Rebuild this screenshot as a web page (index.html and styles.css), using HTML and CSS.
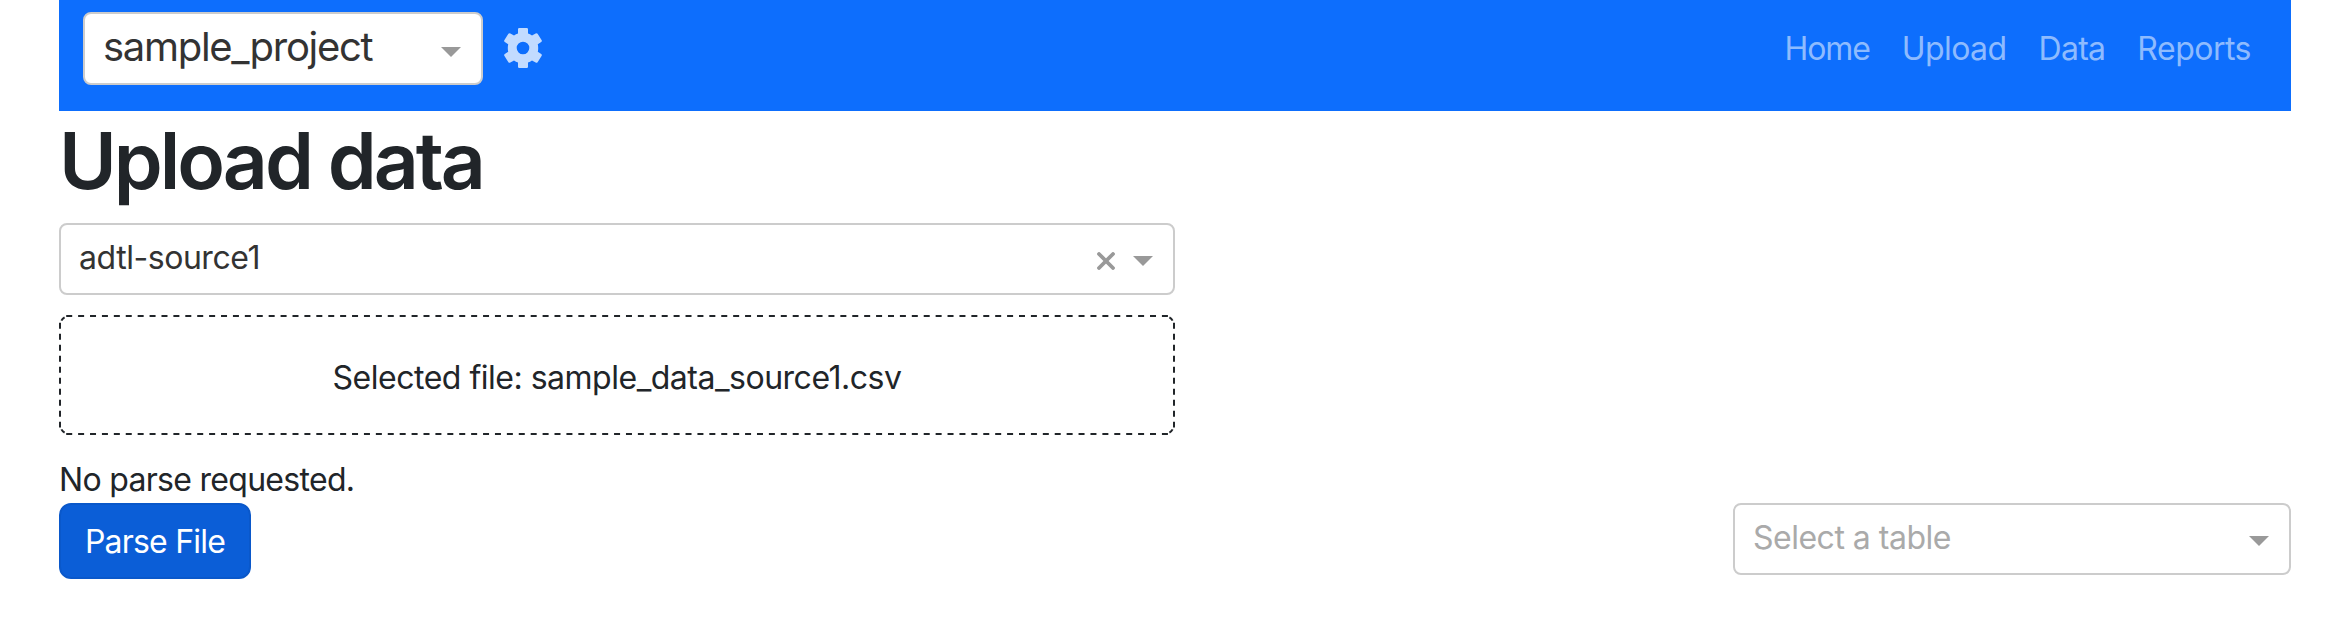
FILE: index.html
```
<!DOCTYPE html>
<html lang="en">
<head>
<meta charset="utf-8">
<title>Upload data</title>
<link rel="stylesheet" href="styles.css">
</head>
<body>
<div class="container">
  <nav class="navbar">
    <div class="select select-project"><span class="value">sample_project</span><span class="arrow"></span></div>
    <svg class="gear" viewBox="0 0 40 40"><path fill-rule="evenodd" d="M15 1.2Q15 0 16.2 0H23.8Q25 0 25 1.2V5.4Q27 6 29 7.4L32.6 5.4Q33.800 4.700 34.600 5.800L38.700 12.200Q39.200 13.300 38.200 14L34.800 16.200Q35.600 20 34.800 23.800L38.200 26Q39.200 26.700 38.700 27.800L34.600 34.200Q33.800 35.300 32.600 34.600L29 32.600Q27 34 25 34.600V38.800Q25 40 23.800 40H16.200Q15 40 15 38.800V34.600Q13 34 11 32.600L7.400 34.600Q6.200 35.300 5.400 34.200L1.300 27.800Q.8 26.700 1.800 26L5.200 23.800Q4.400 20 5.200 16.200L1.800 14Q.8 13.300 1.300 12.200L5.400 5.800Q6.200 4.700 7.400 5.400L11 7.400Q13 6 15 5.400ZM20 13.700A6.300 6.300 0 1 0 20 26.300A6.300 6.300 0 1 0 20 13.700Z"/></svg>
    <div class="links"><a class="home">Home</a><a class="upload">Upload</a><a class="data">Data</a><a class="reports">Reports</a></div>
  </nav>
  <h1>Upload data</h1>
  <div class="select select-source"><span class="value">adtl-source1</span><svg class="clear" viewBox="0 0 18 18"><path d="M2 2L16 16M16 2L2 16"/></svg><span class="arrow"></span></div>
  <div class="dropzone">
    <svg class="outline" viewBox="0 0 1116 120"><path class="horizontal" d="M7.200 1H1109M7.200 119H1109"/><path class="vertical" d="M1 7.700V112.500M1115 7.700V112.500"/><path d="M2.400 5.600Q3.500 3.500 5.600 2.400M1110.400 2.400Q1112.500 3.500 1113.600 5.600M2.400 114.400Q3.500 116.500 5.600 117.600M1110.400 117.600Q1112.500 116.500 1113.600 114.400"/></svg>
    <span class="file">Selected file: sample_data_source1.csv</span>
  </div>
  <div class="status">No parse requested.</div>
  <div class="actions">
    <button class="parse">Parse File</button>
    <div class="select select-table"><span class="value">Select a table</span><span class="arrow"></span></div>
  </div>
</div>
</body>
</html>
```

FILE: styles.css
```
* { box-sizing: border-box; }
body { margin: 0; background: #fff; color: #212529; font: 430 32px/48px Inter, sans-serif; }
.container { width: 2232px; margin-left: 59px; }
.navbar { height: 111px; padding: 12px 40px 26px 24px; background: #0d6efd; display: flex; align-items: flex-start; }
.select { display: flex; align-items: center; height: 72px; border: 2px solid #ccc; border-radius: 8px; background: #fff; color: #333; padding: 0 20px 0 18px; white-space: nowrap; }
.value { flex: 1; letter-spacing: -0.45px; padding-bottom: 3px; }
.arrow { width: 20px; height: 10px; margin-top: 4px; background: #999; clip-path: polygon(0 0, 100% 0, 50% 100%); }
.select-project { width: 400px; height: 73px; font-size: 40px; }
.select-project .value { letter-spacing: -1.3px; padding-bottom: 4px; }
.select-project .arrow { margin-top: 7px; }
.gear { width: 40px; height: 40px; margin: 16px 0 0 20px; fill: #c2dbff; }
.links { margin-left: auto; display: flex; gap: 32px; padding-top: 13px; color: #8ebbfe; }
.home { letter-spacing: -1.1px; }
.upload { letter-spacing: -0.6px; }
.data { letter-spacing: -0.7px; }
.reports { letter-spacing: -0.5px; }
h1 { margin: 0; height: 112px; padding-top: 2px; font-size: 78.5px; line-height: 96px; font-weight: 600; letter-spacing: -3px; }
.select-source { width: 1116px; }
.clear { width: 18px; height: 18px; margin: 3px 18px 0 0; fill: none; stroke: #999; stroke-width: 3.8; stroke-linecap: round; }
.dropzone { position: relative; width: 1116px; height: 120px; margin-top: 20px; padding-top: 5px; display: flex; justify-content: center; align-items: center; }
.outline { position: absolute; inset: 0; width: 100%; height: 100%; fill: none; stroke: #212529; stroke-width: 2; }
.horizontal { stroke-dasharray: 6 5.91; }
.vertical { stroke-dasharray: 6 5; }
.file { letter-spacing: -0.49px; }
.status { margin-top: 20px; height: 48px; padding-top: 1px; letter-spacing: -0.7px; }
.actions { display: flex; justify-content: space-between; align-items: flex-start; }
.parse { width: 192px; height: 76px; border: 2px solid #0a58ca; border-radius: 12px; background: #0b5ed7; color: #fff; font: inherit; letter-spacing: -0.8px; padding: 1px 0 0; white-space: nowrap; }
.select-table { width: 558px; color: #aaa; }
.select-table .value { letter-spacing: -0.5px; }
```
